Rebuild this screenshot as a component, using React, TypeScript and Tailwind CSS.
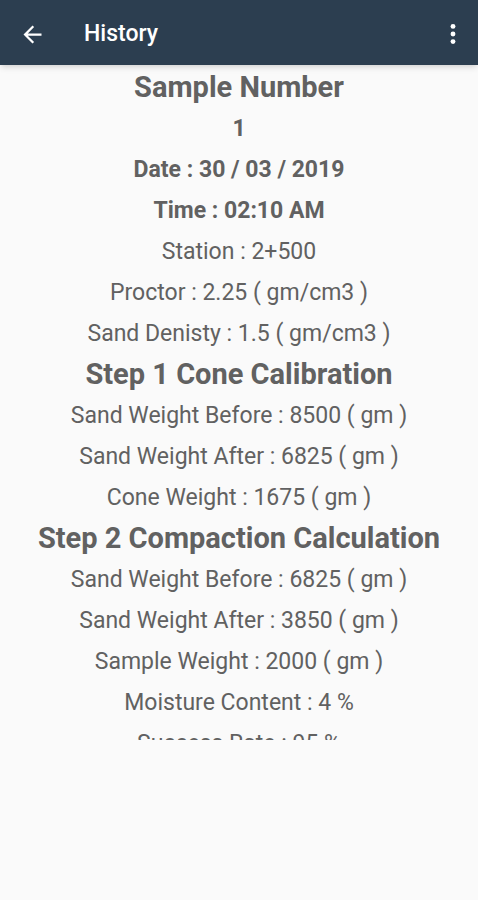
import React from "react";

const Dots = () => (
  <svg width="28" height="28" viewBox="0 0 24 24" fill="white">
    <circle cx="12" cy="5.5" r="2.1" />
    <circle cx="12" cy="12" r="2.1" />
    <circle cx="12" cy="18.5" r="2.1" />
  </svg>
);

const Back = () => (
  <svg width="27" height="27" viewBox="0 0 24 24" fill="white">
    <path d="M20 11H7.83l5.59-5.59L12 4l-8 8 8 8 1.41-1.41L7.83 13H20v-2z" />
  </svg>
);

type Row = { t: string; k: "h" | "b" | "r" };

const rows: Row[] = [
  { t: "Sample Number", k: "h" },
  { t: "1", k: "b" },
  { t: "Date : 30 / 03 / 2019", k: "b" },
  { t: "Time : 02:10 AM", k: "b" },
  { t: "Station : 2+500", k: "r" },
  { t: "Proctor : 2.25 ( gm/cm3 )", k: "r" },
  { t: "Sand Denisty : 1.5 ( gm/cm3 )", k: "r" },
  { t: "Step 1 Cone Calibration", k: "h" },
  { t: "Sand Weight Before : 8500 ( gm )", k: "r" },
  { t: "Sand Weight After : 6825 ( gm )", k: "r" },
  { t: "Cone Weight : 1675 ( gm )", k: "r" },
  { t: "Step 2 Compaction Calculation", k: "h" },
  { t: "Sand Weight Before : 6825 ( gm )", k: "r" },
  { t: "Sand Weight After : 3850 ( gm )", k: "r" },
  { t: "Sample Weight : 2000 ( gm )", k: "r" },
  { t: "Moisture Content : 4 %", k: "r" },
  { t: "Success Rate : 95 %", k: "r" },
];

export default function App() {
  return (
    <div
      className="w-[478px] h-[900px] bg-[#fafafa] flex flex-col"
      style={{ fontFamily: "Roboto, sans-serif" }}
    >
      <div className="h-[65px] bg-[#2c3e50] flex items-center pl-[19px] pr-[11px] pt-[3px] shadow-md z-10 shrink-0">
        <Back />
        <div className="ml-[38px] text-white text-[23px] font-medium flex-1">History</div>
        <Dots />
      </div>
      <div className="h-[675px] overflow-hidden flex flex-col items-center text-[#616161] pt-[2px]">
        {rows.map((r, i) => (
          <div
            key={i}
            className={
              r.k === "h"
                ? "text-[29px] font-bold leading-[41px] whitespace-nowrap"
                : r.k === "b"
                ? "text-[23px] font-bold leading-[41px] whitespace-nowrap"
                : "text-[23px] leading-[41px] whitespace-nowrap"
            }
          >
            {r.t}
          </div>
        ))}
      </div>
    </div>
  );
}
